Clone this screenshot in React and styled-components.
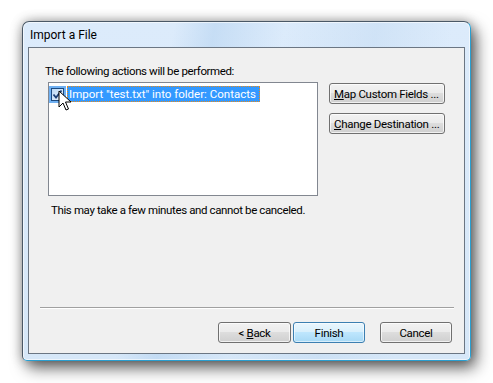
import React from 'react'
import styled, { createGlobalStyle } from 'styled-components'

const Global = createGlobalStyle`
  html, body { margin: 0; padding: 0; background: #ffffff; }
  body { font-family: Roboto, "Liberation Sans", sans-serif; font-size: 11.5px; color: #000; }
`

const Page = styled.div`
  width: 493px;
  height: 383px;
  padding: 21px 0 0 22px;
  box-sizing: border-box;
`

const Window = styled.div`
  position: relative;
  width: 449px;
  height: 340px;
  box-sizing: border-box;
  border: 1px solid #4a5866;
  border-right-color: #2a9fd0;
  border-bottom-color: #2a9fd0;
  border-radius: 7px 7px 5px 5px;
  padding: 0 5px 6px 5px;
  display: flex;
  flex-direction: column;
  background:
    linear-gradient(100deg, rgba(255,255,255,0) 30%, rgba(180,210,240,0.55) 38%, rgba(255,255,255,0) 52%, rgba(190,215,240,0.4) 70%, rgba(255,255,255,0) 85%),
    linear-gradient(180deg, #dcebfb 0%, #d6e7f8 100%);
  box-shadow:
    inset 0 0 0 1px rgba(255,255,255,0.6),
    5px 7px 16px rgba(0,0,0,0.6),
    0 0 12px rgba(0,0,0,0.3);
`

const TitleBar = styled.div`
  height: 25px;
  display: flex;
  align-items: center;
  padding-left: 2px;
  font-size: 12px;
  color: #000;
`

const Content = styled.div`
  flex: 1;
  border: 1px solid #6b7683;
  background: #f0f0f0;
  display: flex;
  flex-direction: column;
  box-sizing: border-box;
`

const Label = styled.div`
  margin: 15px 0 0 16px;
  height: 16px;
  line-height: 16px;
  letter-spacing: -0.38px;
`

const BodyRow = styled.div`
  display: flex;
  gap: 11px;
  margin: 3px 0 0 19px;
`

const ListBox = styled.div`
  position: relative;
  width: 270px;
  height: 114px;
  box-sizing: border-box;
  border: 1px solid #828790;
  background: #fff;
  padding: 3px 0 0 2px;
`

const Item = styled.div`
  display: flex;
  align-items: center;
  gap: 3px;
  height: 16px;
`

const Check = styled.div`
  width: 13px;
  height: 13px;
  box-sizing: border-box;
  border: 1px solid #1c4a80;
  background: linear-gradient(135deg, #bcd9f5, #e6f1fc);
  display: flex;
  align-items: center;
  justify-content: center;
  outline: 2px solid #6fb0f2;
`

const ItemText = styled.span`
  background: #3399ff;
  color: #fff;
  height: 16px;
  line-height: 16px;
  padding: 0 4px 0 2px;
  outline: 1px dotted #e88a1a;
  outline-offset: -1px;
`

const Cursor = styled.svg`
  position: absolute;
  left: 9px;
  top: 7px;
`

const SideButtons = styled.div`
  display: flex;
  flex-direction: column;
  gap: 9px;
  margin-top: 1px;
`

const Button = styled.button`
  width: ${p => p.$w || 72}px;
  height: 21px;
  box-sizing: border-box;
  padding: 0;
  font-family: inherit;
  font-size: 11.5px;
  letter-spacing: -0.3px;
  color: #000;
  border-radius: 3px;
  border: 1px solid ${p => (p.$default ? '#3c7fb1' : '#707070')};
  background: ${p =>
    p.$default
      ? 'linear-gradient(180deg, #eaf6fd 0%, #d9f0fc 45%, #bee6fd 50%, #a7d9f5 100%)'
      : 'linear-gradient(180deg, #f2f2f2 0%, #ebebeb 45%, #dddddd 50%, #cfcfcf 100%)'};
  box-shadow: inset 0 0 0 1px ${p => (p.$default ? 'rgba(255,255,255,0.55)' : 'rgba(255,255,255,0.7)')};
  text-align: ${p => p.$align || 'center'};
  padding-left: ${p => (p.$align === 'left' ? '4px' : '0')};
  white-space: nowrap;
`

const Note = styled.div`
  margin: 6px 0 0 22px;
  height: 16px;
  line-height: 16px;
  letter-spacing: -0.38px;
`

const Spacer = styled.div`
  flex: 1;
`

const Separator = styled.div`
  margin: 0 10px 0 11px;
  height: 0;
  border-top: 1px solid #a0a0a0;
  border-bottom: 1px solid #ffffff;
`

const Footer = styled.div`
  display: flex;
  justify-content: flex-end;
  margin: 13px 12px 10px 0;
  gap: 2px;
`

const Gap = styled.div`
  width: 11px;
`

const U = styled.span`
  text-decoration: underline;
`

export default function App() {
  return (
    <Page>
      <Global />
      <Window>
        <TitleBar>Import a File</TitleBar>
        <Content>
          <Label>The following actions will be performed:</Label>
          <BodyRow>
            <ListBox>
              <Item>
                <Check>
                  <svg width="11" height="11" viewBox="0 0 11 11">
                    <path d="M1.5 5.5 L4 8.5 L9.5 1.5" fill="none" stroke="#1b3f76" strokeWidth="1.8" />
                  </svg>
                </Check>
                <ItemText>Import "test.txt" into folder: Contacts</ItemText>
              </Item>
              <Cursor width="14" height="22" viewBox="0 0 14 22">
                <path d="M1 1 L1 17 L5 13 L8 20 L10.5 19 L7.5 12 L13 12 Z" fill="#fff" stroke="#000" strokeWidth="1" strokeLinejoin="round" />
              </Cursor>
            </ListBox>
            <SideButtons>
              <Button $w={116} $align="left"><U>M</U>ap Custom Fields ...</Button>
              <Button $w={116} $align="left"><U>C</U>hange Destination ...</Button>
            </SideButtons>
          </BodyRow>
          <Note>This may take a few minutes and cannot be canceled.</Note>
          <Spacer />
          <Separator />
          <Footer>
            <Button $w={73}>&lt; <U>B</U>ack</Button>
            <Button $default>Finish</Button>
            <Gap />
            <Button>Cancel</Button>
          </Footer>
        </Content>
      </Window>
    </Page>
  )
}
